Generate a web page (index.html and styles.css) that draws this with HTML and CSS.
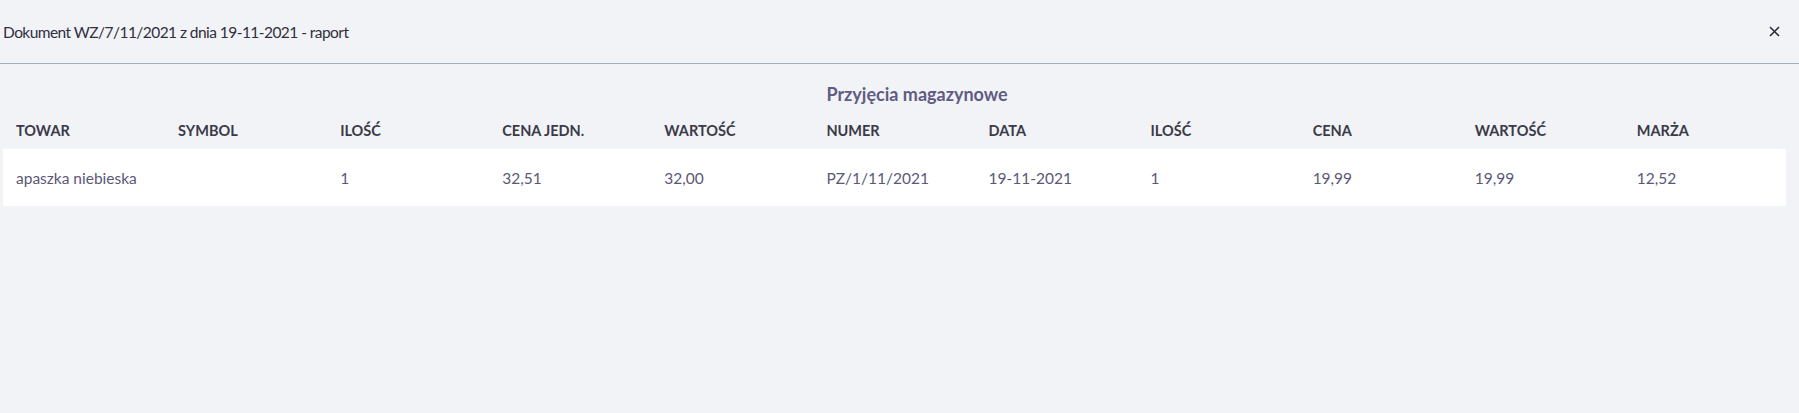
FILE: index.html
```html
<!DOCTYPE html>
<html lang="pl">
<head>
<meta charset="utf-8">
<title>Raport</title>
<link rel="stylesheet" href="styles.css">
</head>
<body>
<div class="modal">
  <div class="modal-header">
    <span class="modal-title">Dokument WZ/7/11/2021 z dnia 19-11-2021 - raport</span>
    <button class="close" aria-label="Zamknij">
      <svg width="11" height="11" viewBox="0 0 11 11"><path d="M1 1L10 10M10 1L1 10" stroke="#2b2b3a" stroke-width="1.6" fill="none"/></svg>
    </button>
  </div>
  <div class="modal-body">
    <table class="report">
      <thead>
        <tr class="group-row">
          <th colspan="5"></th>
          <th colspan="6" class="group-title">Przyjęcia magazynowe</th>
        </tr>
        <tr class="head-row">
          <th>Towar</th>
          <th>Symbol</th>
          <th>Ilość</th>
          <th>Cena jedn.</th>
          <th>Wartość</th>
          <th>Numer</th>
          <th>Data</th>
          <th>Ilość</th>
          <th>Cena</th>
          <th>Wartość</th>
          <th>Marża</th>
        </tr>
      </thead>
      <tbody>
        <tr class="data-row">
          <td>apaszka niebieska</td>
          <td></td>
          <td>1</td>
          <td>32,51</td>
          <td>32,00</td>
          <td>PZ/1/11/2021</td>
          <td>19-11-2021</td>
          <td>1</td>
          <td>19,99</td>
          <td>19,99</td>
          <td>12,52</td>
        </tr>
      </tbody>
    </table>
  </div>
</div>
</body>
</html>
```

FILE: styles.css
```css
html, body {
  margin: 0;
  padding: 0;
  background: #f2f3f7;
  font-family: Lato, "Noto Sans", sans-serif;
}

.modal {
  width: 100%;
}

.modal-header {
  display: flex;
  align-items: center;
  justify-content: space-between;
  height: 63px;
  padding: 0 19px 0 3px;
  border-bottom: 1px solid #a5aec3;
}

.modal-title {
  font-size: 15.5px;
  letter-spacing: -0.55px;
  color: #2f2f3d;
}

.close {
  background: none;
  border: 0;
  padding: 0;
  display: flex;
  cursor: pointer;
}

.modal-body {
  padding: 10px 13px 0 3px;
}

.report {
  width: 100%;
  table-layout: fixed;
  border-collapse: collapse;
}

.report th,
.report td {
  text-align: left;
  padding: 0 13px;
}

.group-row th {
  padding-top: 8px;
  padding-bottom: 6px;
  line-height: 24px;
}

.group-title {
  font-size: 18px;
  font-weight: 700;
  color: #5f5b82;
}

.head-row th {
  height: 37px;
  font-size: 14.5px;
  font-weight: 700;
  text-transform: uppercase;
  color: #3a3a48;
}

.data-row {
  background: #ffffff;
}

.data-row td {
  height: 57px;
  font-size: 15.5px;
  color: #5b5877;
}
```
